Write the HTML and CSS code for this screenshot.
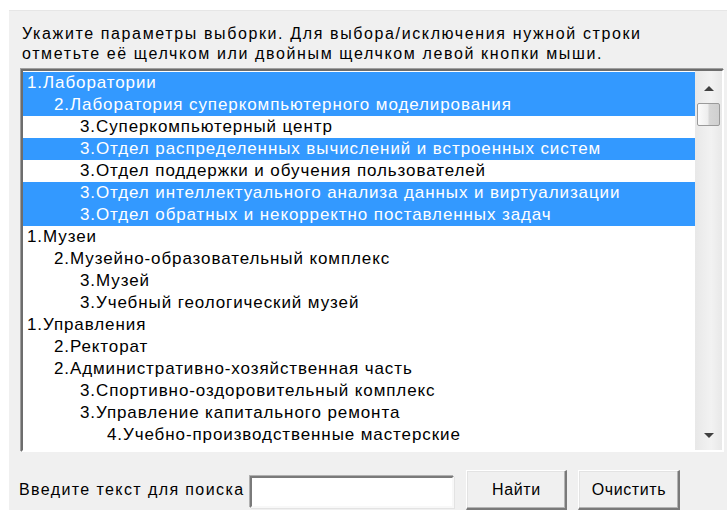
FILE: index.html
```html
<!DOCTYPE html>
<html lang="ru">
<head>
<meta charset="utf-8">
<title>Параметры выборки</title>
<link rel="stylesheet" href="styles.css">
</head>
<body>
<div class="panel">
  <p class="hint">Укажите параметры выборки. Для выбора/исключения нужной строки<br>отметьте её щелчком или двойным щелчком левой кнопки мыши.</p>

  <div class="listbox">
    <ul class="rows">
      <li class="row l1 sel">1.Лаборатории</li>
      <li class="row l2 sel">2.Лаборатория суперкомпьютерного моделирования</li>
      <li class="row l3">3.Суперкомпьютерный центр</li>
      <li class="row l3 sel">3.Отдел распределенных вычислений и встроенных систем</li>
      <li class="row l3">3.Отдел поддержки и обучения пользователей</li>
      <li class="row l3 sel">3.Отдел интеллектуального анализа данных и виртуализации</li>
      <li class="row l3 sel">3.Отдел обратных и некорректно поставленных задач</li>
      <li class="row l1">1.Музеи</li>
      <li class="row l2">2.Музейно-образовательный комплекс</li>
      <li class="row l3">3.Музей</li>
      <li class="row l3">3.Учебный геологический музей</li>
      <li class="row l1">1.Управления</li>
      <li class="row l2">2.Ректорат</li>
      <li class="row l2">2.Административно-хозяйственная часть</li>
      <li class="row l3">3.Спортивно-оздоровительный комплекс</li>
      <li class="row l3">3.Управление капитального ремонта</li>
      <li class="row l4">4.Учебно-производственные мастерские</li>
    </ul>
    <div class="scrollbar">
      <span class="arrow up"></span>
      <span class="thumb"></span>
      <span class="track"></span>
      <span class="arrow down"></span>
    </div>
  </div>

  <div class="search">
    <label class="search-label" for="q">Введите текст для поиска</label>
    <input class="search-input" id="q" type="text">
    <button class="btn btn-find" type="button">Найти</button>
    <button class="btn btn-clear" type="button">Очистить</button>
  </div>
</div>
</body>
</html>
```

FILE: styles.css
```css
html, body {
  margin: 0;
  padding: 0;
  background: #ffffff;
}

body {
  font-family: "Liberation Sans", Arial, sans-serif;
  color: #000;
}

.panel {
  margin: 10px 0 0 9px;
  height: 500px;
  background: #f0f0f0;
  border-top: 1px solid #e6e6e6;
  display: flex;
  flex-direction: column;
  overflow: hidden;
}

.hint {
  margin: 13px 0 0 13px;
  font-size: 16px;
  letter-spacing: 1.62px;
  line-height: 20px;
  white-space: nowrap;
}

/* sunken list box with its own scrollbar */
.listbox {
  margin: 5px 0 0 12px;
  width: 699px;
  height: 379px;
  flex-shrink: 0;
  display: flex;
  background: #fff;
  border-style: solid;
  border-width: 2px;
  border-color: #6d6d6d #ffffff #ffffff #6d6d6d;
  box-shadow: -1px -1px 0 #a0a0a0;
}

.rows {
  list-style: none;
  margin: 0;
  padding: 1px 0 0;
  flex: 1;
  overflow: hidden;
}

.row {
  height: 22px;
  line-height: 22px;
  font-size: 17px;
  letter-spacing: 0.9px;
  white-space: nowrap;
}

.row.sel {
  background: #3399ff;
  color: #fff;
}

.l1 { padding-left: 4px; }
.l2 { padding-left: 31px; }
.l3 { padding-left: 57px; }
.l4 { padding-left: 84px; }

.scrollbar {
  width: 27px;
  display: flex;
  flex-direction: column;
  align-items: center;
  background: linear-gradient(to right, #e8e8e8, #f2f2f2 60%, #e8e8e8);
}

.arrow {
  width: 0;
  height: 0;
  border-left: 5px solid transparent;
  border-right: 5px solid transparent;
}

.arrow.up {
  margin-top: 15px;
  border-bottom: 5px solid #404040;
}

.arrow.down {
  margin-bottom: 12px;
  border-top: 5px solid #404040;
}

.thumb {
  margin-top: 12px;
  width: 23px;
  height: 23px;
  box-sizing: border-box;
  border: 1px solid #9a9a9a;
  border-radius: 2px;
  background: linear-gradient(to right, #fbfbfb, #eeeeee 45%, #d6d6d6 55%, #cfcfcf);
}

.track {
  flex: 1;
}

.search {
  margin-top: 18px;
  display: flex;
  align-items: center;
  height: 40px;
}

.search-label {
  flex-shrink: 0;
  margin-left: 10px;
  font-size: 16px;
  letter-spacing: 1.4px;
}

.search-input {
  flex-shrink: 0;
  margin: 4px 0 0 6px;
  width: 204px;
  height: 32px;
  box-sizing: border-box;
  padding: 0 4px;
  background: #fff;
  border-style: solid;
  border-width: 2px;
  border-color: #7a7a7a #f8f8f8 #f8f8f8 #7a7a7a;
  box-shadow: -1px -1px 0 #b0b0b0, 1px 1px 0 #e3e3e3;
  outline: none;
  font: inherit;
}

.btn {
  flex-shrink: 0;
  height: 40px;
  box-sizing: border-box;
  margin-left: 12px;
  padding: 0;
  font-family: "Liberation Sans", Arial, sans-serif;
  font-size: 16px;
  letter-spacing: 0.6px;
  color: #000;
  background: #f0f0f0;
  border-style: solid;
  border-width: 1px 2px 2px 1px;
  border-color: #ffffff #7a7a7a #7a7a7a #ffffff;
  box-shadow: inset -1px -1px 0 #b4b4b4, inset 1px 1px 0 #e3e3e3;
}

.btn-find { width: 101px; }
.btn-clear { width: 102px; margin-left: 11px; }
```
